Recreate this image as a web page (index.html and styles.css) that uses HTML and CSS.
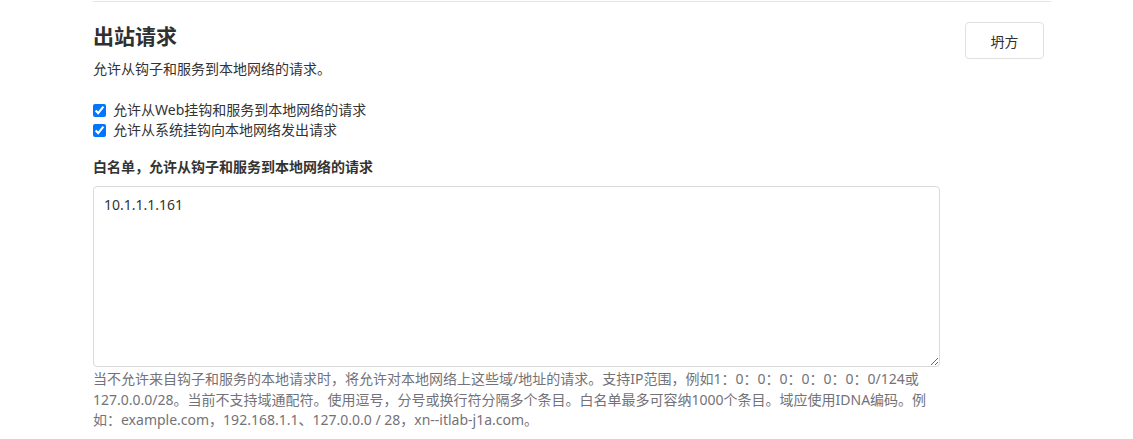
FILE: index.html
```html
<!DOCTYPE html>
<html lang="zh-CN">
<head>
  <meta charset="UTF-8">
  <title>出站请求</title>
  <link rel="stylesheet" href="styles.css">
</head>
<body>
  <section class="settings">
    <div class="settings-header">
      <div>
        <h4 class="settings-title">出站请求</h4>
        <p class="settings-desc">允许从钩子和服务到本地网络的请求。</p>
      </div>
      <button type="button" class="btn">坍方</button>
    </div>
    <form class="settings-body">
      <div class="checks">
        <label class="check"><input type="checkbox" checked> 允许从Web挂钩和服务到本地网络的请求</label>
        <label class="check"><input type="checkbox" checked> 允许从系统挂钩向本地网络发出请求</label>
      </div>
      <label class="field-label" for="whitelist">白名单，允许从钩子和服务到本地网络的请求</label>
      <textarea id="whitelist" class="field">10.1.1.1.161</textarea>
      <p class="help">当不允许来自钩子和服务的本地请求时，将允许对本地网络上这些域/地址的请求。支持IP范围，例如1：0：0：0：0：0：0：0/124或127.0.0.0/28。当前不支持域通配符。使用逗号，分号或换行符分隔多个条目。白名单最多可容纳1000个条目。域应使用IDNA编码。例如：example.com，192.168.1.1、127.0.0.0 / 28，xn--itlab-j1a.com。</p>
    </form>
  </section>
</body>
</html>
```

FILE: styles.css
```css
body { margin: 0; background: #fff; color: #333; font-family: "Noto Sans", "Noto Sans CJK SC", sans-serif; font-size: 14px; }
.settings { margin: 1px 0 0 93px; width: 958px; border-top: 1px solid #e5e5e5; }
.settings-header { display: flex; justify-content: space-between; align-items: flex-start; padding-top: 20px; padding-right: 7px; }
.settings-title { margin: 0; font-size: 21px; line-height: 28px; font-weight: 700; color: #303030; }
.settings-desc { margin: 9px 0 0; line-height: 20px; }
.btn { width: 79px; height: 37px; background: #fff; border: 1px solid #e0e0e0; border-radius: 4px; font: inherit; color: #303030; cursor: pointer; }
.settings-body { width: 847px; }
.checks { margin-top: 21px; }
.check { display: flex; align-items: center; gap: 7px; line-height: 20px; }
.check input { margin: 0; width: 13px; height: 13px; }
.field-label { display: block; margin-top: 17px; font-weight: 700; line-height: 20px; }
.field { display: block; box-sizing: border-box; width: 100%; height: 181px; margin-top: 9px; padding: 8px 10px; border: 1px solid #dbdbdb; border-radius: 4px; font: inherit; color: #333; line-height: 20px; resize: vertical; }
.help { margin: 2px 0 0; color: #737278; line-height: 20.5px; }
```
